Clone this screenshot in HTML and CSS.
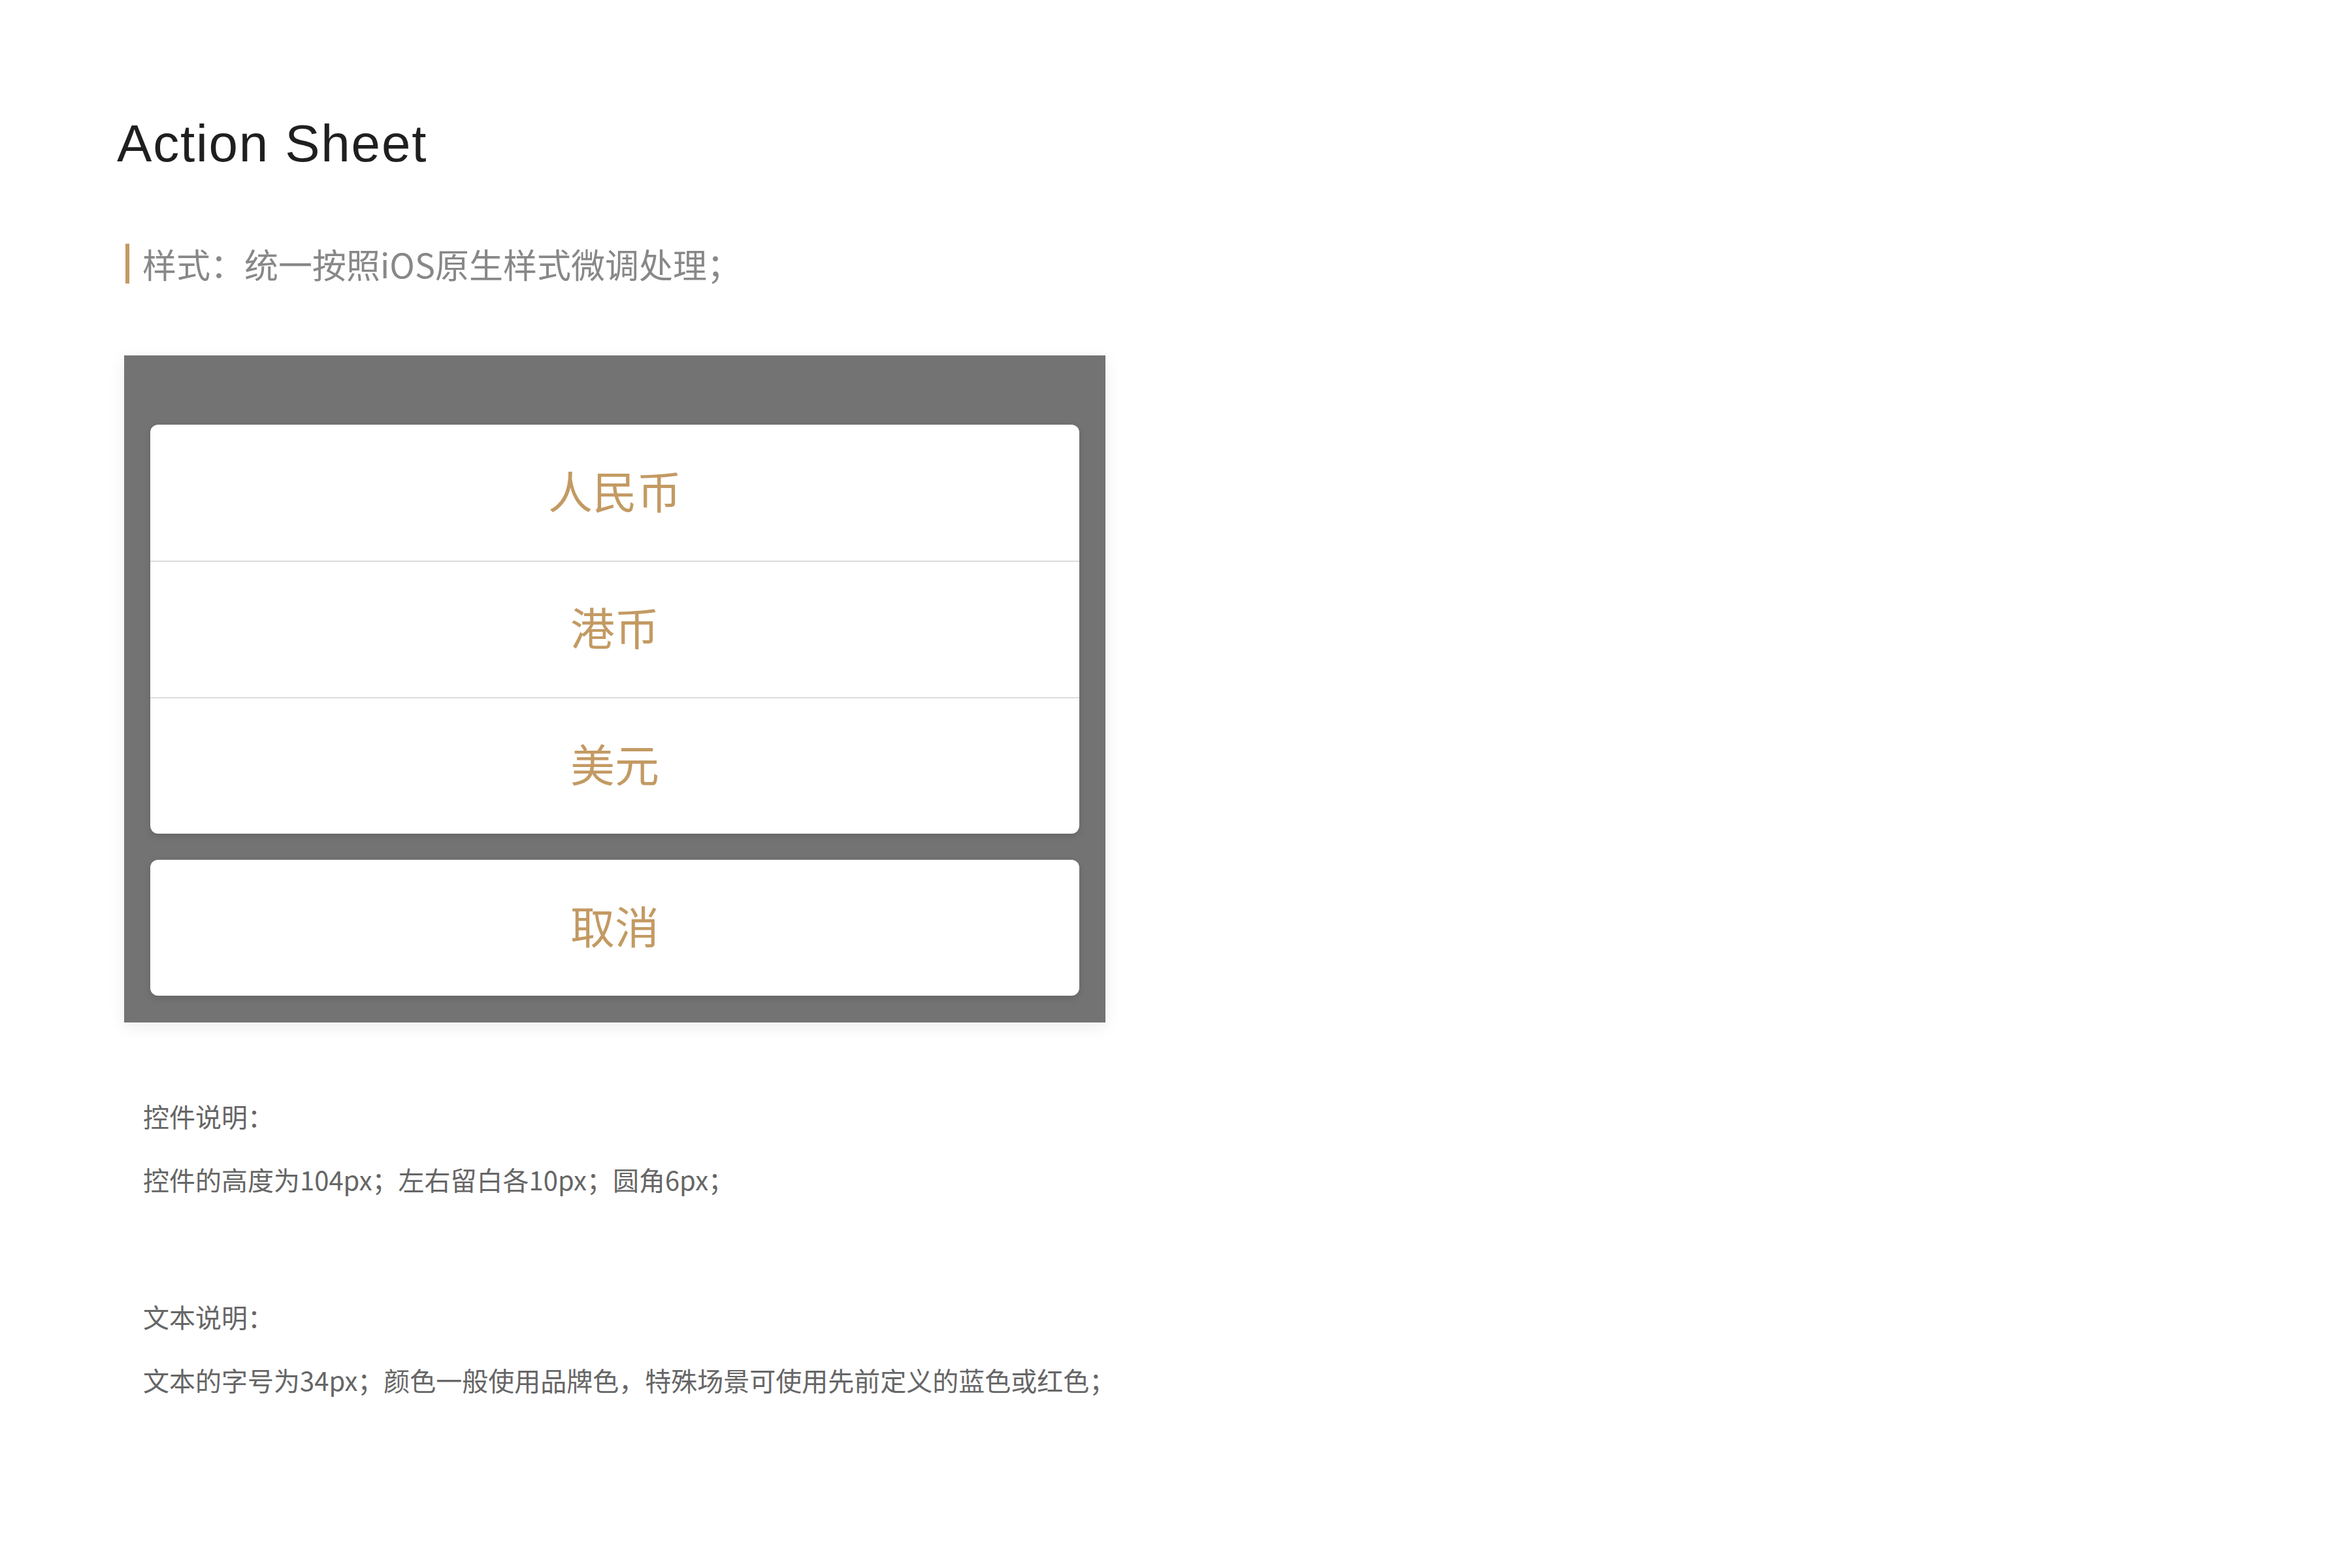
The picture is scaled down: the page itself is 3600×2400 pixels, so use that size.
FILE: index.html
```html
<!DOCTYPE html>
<html lang="zh-CN">
<head>
<meta charset="utf-8">
<title>Action Sheet</title>
<link rel="stylesheet" href="styles.css">
</head>
<body>
<main class="page">
  <h1 class="title">Action Sheet</h1>
  <div class="subtitle">样式：统一按照iOS原生样式微调处理；</div>
  <section class="mock">
    <div class="sheet-group">
      <div class="sheet-item">人民币</div>
      <div class="sheet-item">港币</div>
      <div class="sheet-item">美元</div>
    </div>
    <div class="sheet-group">
      <div class="sheet-item">取消</div>
    </div>
  </section>
  <section class="notes">
    <div class="note-block">
      <p class="note">控件说明：</p>
      <p class="note">控件的高度为104px；左右留白各10px；圆角6px；</p>
    </div>
    <div class="note-block">
      <p class="note">文本说明：</p>
      <p class="note">文本的字号为34px；颜色一般使用品牌色，特殊场景可使用先前定义的蓝色或红色；</p>
    </div>
  </section>
</main>
</body>
</html>
```
FILE: styles.css
```css
html, body {
  margin: 0;
  padding: 0;
  background: #ffffff;
}
.page {
  padding: 180px 0 0 179px;
  font-family: "Noto Sans CJK SC", "Noto Sans", sans-serif;
}
.title {
  margin: 0;
  font-family: "Liberation Sans", Arial, sans-serif;
  font-weight: 400;
  font-size: 80px;
  line-height: 80px;
  letter-spacing: 1.8px;
  color: #1f1f1f;
}
.subtitle {
  margin: 113px 0 0 13px;
  border-left: 6px solid #c39a63;
  padding-left: 20px;
  font-size: 52px;
  line-height: 61px;
  height: 61px;
  color: #888888;
}
.mock {
  margin: 110px 0 0 11px;
  width: 1502px;
  box-sizing: border-box;
  padding: 106px 40px 41px;
  background: #737373;
  box-shadow: 0 6px 24px rgba(0, 0, 0, 0.08);
  display: flex;
  flex-direction: column;
  gap: 40px;
}
.sheet-group {
  background: #ffffff;
  border-radius: 12px;
  overflow: hidden;
  box-shadow: 0 4px 12px rgba(0, 0, 0, 0.12);
}
.sheet-item {
  height: 208px;
  box-sizing: border-box;
  padding-bottom: 10px;
  display: flex;
  align-items: center;
  justify-content: center;
  font-size: 68px;
  color: #c39a63;
}
.sheet-item + .sheet-item {
  height: 209px;
  border-top: 2px solid #dcdcdc;
}
.notes {
  margin: 115px 0 0 40px;
  display: flex;
  flex-direction: column;
  gap: 154px;
}
.note-block {
  display: flex;
  flex-direction: column;
  gap: 41px;
}
.note {
  margin: 0;
  font-size: 40px;
  line-height: 56px;
  color: #666666;
}
```
